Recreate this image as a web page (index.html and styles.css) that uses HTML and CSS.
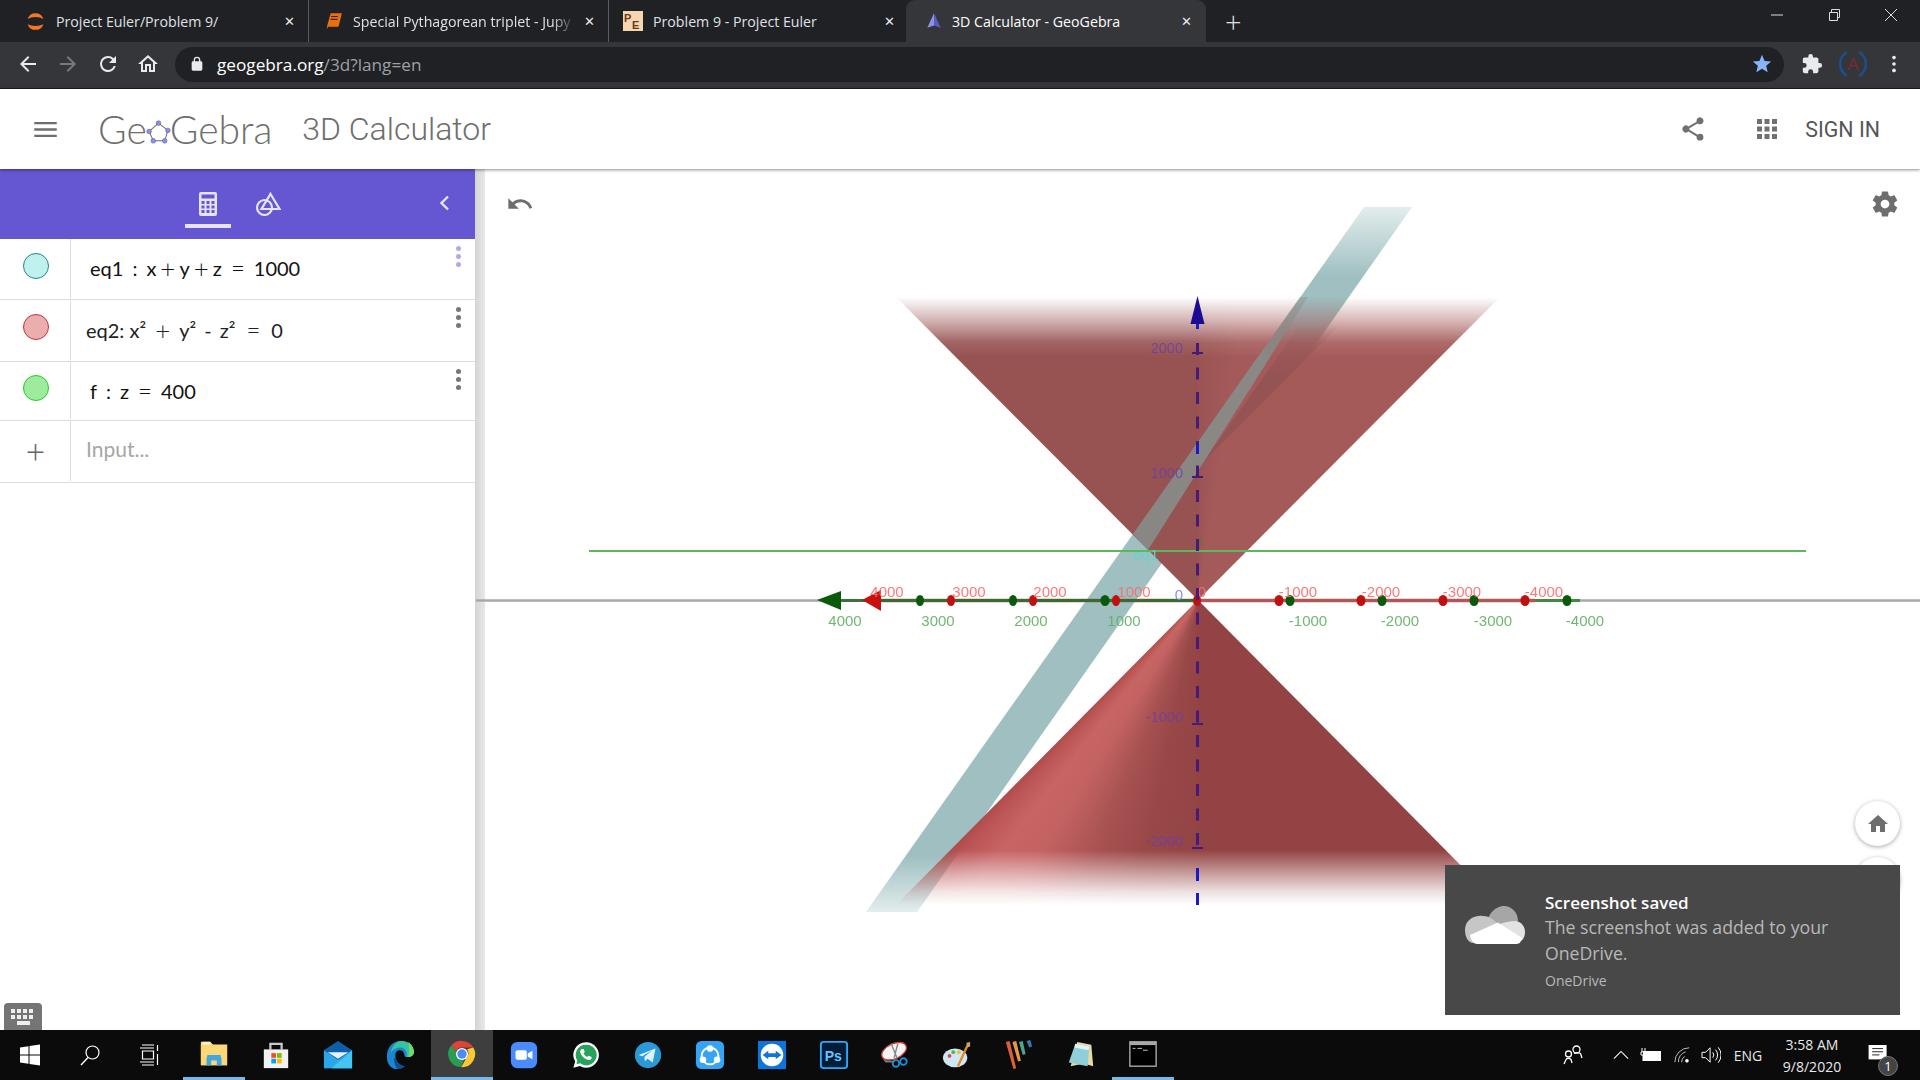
FILE: index.html
```html
<!DOCTYPE html>
<html lang="en">
<head>
    <meta charset="utf-8">
    <title>3D Calculator - GeoGebra</title>
    <link rel="stylesheet" href="styles.css">
</head>
<body>
    <!-- browser tabs -->
    <div class="tabstrip">
        <div class="tab">
            <svg class="favicon favicon-jupyter" viewBox="0 0 16 16"><path d="M2 6a6.300 6.300 0 0 1 12 0a8 4 0 0 0-12 0z" fill="#f37726"/><path d="M2 10a6.300 6.300 0 0 0 12 0a8 4 0 0 1-12 0z" fill="#f37726"/></svg>
            <span class="tab-title">Project Euler/Problem 9/</span>
            <span class="tab-close">&#10005;</span>
        </div>
        <div class="tab">
            <svg class="favicon" viewBox="0 0 16 16"><path d="M5 1h10l-3 12H3L1.500 15l.5-3z" fill="#e8710a"/><path d="M5.500 4h6M5 6.500h6" stroke="#3a2208" stroke-width="1"/></svg>
            <span class="tab-title tab-title-long">Special Pythagorean triplet - Jupy</span>
            <span class="tab-close">&#10005;</span>
        </div>
        <div class="tab">
            <svg class="favicon favicon-pe" viewBox="0 0 20 20"><rect width="20" height="20" fill="#f4d7b0"/><text x="1" y="11" class="pe-letter">P</text><text x="9" y="18" class="pe-letter">E</text></svg>
            <span class="tab-title">Problem 9 - Project Euler</span>
            <span class="tab-close">&#10005;</span>
        </div>
        <div class="tab tab-active">
            <svg class="favicon" viewBox="0 0 16 16"><path d="M8 1L2 14l6-2z" fill="#8f8fe8"/><path d="M8 1l6 13-6-2z" fill="#5c5cc0"/></svg>
            <span class="tab-title">3D Calculator - GeoGebra</span>
            <span class="tab-close">&#10005;</span>
        </div>
        <span class="new-tab">+</span>
        <div class="window-controls">
            <svg viewBox="0 0 14 14"><path d="M1 7h12" stroke="#ddd" fill="none"/></svg>
            <svg viewBox="0 0 14 14"><path d="M2.500 4.500h8v8h-8zM4.500 4.500v-3h8v8h-2" stroke="#ddd" fill="none"/></svg>
            <svg viewBox="0 0 14 14"><path d="M1 1l12 12M13 1L1 13" stroke="#ddd" fill="none"/></svg>
        </div>
    </div>

    <!-- address bar -->
    <div class="toolbar">
        <svg class="nav-btn" viewBox="0 0 24 24"><path d="M20 11H7.800l5.600-5.600L12 4l-8 8 8 8 1.400-1.400L7.800 13H20z" fill="#e8eaed"/></svg>
        <svg class="nav-btn" viewBox="0 0 24 24"><path d="M4 11h12.200l-5.600-5.600L12 4l8 8-8 8-1.400-1.400 5.600-5.600H4z" fill="#76787b"/></svg>
        <svg class="nav-btn" viewBox="0 0 24 24"><path d="M17.650 6.350A7.960 7.960 0 0 0 12 4a8 8 0 1 0 7.730 10h-2.080A6 6 0 1 1 12 6c1.660 0 3.140.69 4.220 1.780L13 11h7V4z" fill="#e8eaed"/></svg>
        <svg class="nav-btn" viewBox="0 0 24 24"><path d="M12 5.700l5 4.500V18h-2v-6H9v6H7v-7.800zM12 3L2 12h3v8h6v-6h2v6h6v-8h3z" fill="#e8eaed"/></svg>
        <div class="omnibox">
            <svg class="lock" viewBox="0 0 24 24"><path d="M18 8h-1V6a5 5 0 0 0-10 0v2H6a2 2 0 0 0-2 2v10c0 1.100.9 2 2 2h12a2 2 0 0 0 2-2V10a2 2 0 0 0-2-2zM9 6a3 3 0 0 1 6 0v2H9z" fill="#e8eaed"/></svg>
            <span class="url-host">geogebra.org</span><span class="url-path">/3d?lang=en</span>
            <svg class="star" viewBox="0 0 24 24"><path d="M12 17.300l6.200 3.700-1.600-7L22 9.200l-7.200-.6L12 2 9.200 8.600 2 9.200 7.500 14l-1.700 7z" fill="#8ab4f8"/></svg>
        </div>
        <div class="toolbar-right">
            <svg class="ext-btn" viewBox="0 0 24 24"><path d="M20.500 11H19V7c0-1.100-.9-2-2-2h-4V3.500a2.500 2.500 0 0 0-5 0V5H4c-1.100 0-2 .9-2 2v3.800h1.500a2.700 2.700 0 0 1 0 5.400H2V20c0 1.100.9 2 2 2h3.800v-1.500a2.700 2.700 0 0 1 5.400 0V22H17c1.100 0 2-.9 2-2v-4h1.500a2.500 2.500 0 0 0 0-5z" fill="#e8eaed"/></svg>
            <svg class="ext-btn avatar" viewBox="0 0 28 28"><path d="M8 2a14 14 0 0 0 0 24M20 2a14 14 0 0 1 0 24" stroke="#1c4f8f" stroke-width="2.500" fill="none"/><text x="14" y="20" class="avatar-letter">A</text></svg>
            <svg class="ext-btn" viewBox="0 0 24 24"><circle cx="12" cy="5" r="2" fill="#e8eaed"/><circle cx="12" cy="12" r="2" fill="#e8eaed"/><circle cx="12" cy="19" r="2" fill="#e8eaed"/></svg>
        </div>
    </div>

    <!-- geogebra header -->
    <header class="app-header">
        <svg class="menu-btn" viewBox="0 0 24 16"><path d="M0 0h24v2.500H0zM0 6.750h24v2.500H0zM0 13.500h24V16H0z" fill="#6e6e6e"/></svg>
        <div class="logo">
            <span>Ge</span>
            <svg class="logo-mark" viewBox="0 0 24 24"><path d="M12 3l9 7-3 10H7L3 11z" fill="none" stroke="#6e6e6e" stroke-width="1"/><g fill="#8f8fe8" stroke="#5a5ac0" stroke-width=".6"><circle cx="12" cy="3" r="2.200"/><circle cx="21" cy="10" r="2.200"/><circle cx="18" cy="20" r="2.200"/><circle cx="7" cy="20" r="2.200"/><circle cx="3" cy="11" r="2.200"/></g></svg>
            <span>Gebra</span>
        </div>
        <span class="app-title">3D Calculator</span>
        <div class="header-right">
            <svg class="share" viewBox="0 0 24 24"><path d="M18 16.080c-.76 0-1.440.3-1.960.77L8.910 12.700c.05-.23.090-.46.090-.7s-.04-.47-.09-.7l7.050-4.110A3 3 0 1 0 15 5c0 .24.040.47.090.7L8.040 9.810a3 3 0 1 0 0 4.380l7.120 4.160c-.05.21-.08.43-.08.65a2.920 2.920 0 1 0 2.920-2.920z" fill="#707070"/></svg>
            <svg class="apps" viewBox="0 0 20 20"><path d="M0 0h5v5H0zM7.500 0h5v5h-5zM15 0h5v5h-5zM0 7.500h5v5H0zM7.500 7.500h5v5h-5zM15 7.500h5v5h-5zM0 15h5v5H0zM7.500 15h5v5h-5zM15 15h5v5h-5z" fill="#707070"/></svg>
            <span class="sign-in">SIGN IN</span>
        </div>
    </header>

    <main class="workspace">
        <aside class="algebra">
            <div class="algebra-head">
                <div class="head-tab head-tab-active">
                    <svg viewBox="0 0 18 24"><rect width="18" height="24" rx="2" fill="#e6e3fa"/><rect x="2.500" y="2.500" width="13" height="4" fill="#6557d2"/><path d="M2.500 9h3v3h-3zM7.500 9h3v3h-3zM12.500 9h3v3h-3zM2.500 13.500h3v3h-3zM7.500 13.500h3v3h-3zM12.500 13.500h3v3h-3zM2.500 18h3v3h-3zM7.500 18h3v3h-3zM12.500 18h3v3h-3z" fill="#6557d2"/></svg>
                </div>
                <div class="head-tab">
                    <svg viewBox="0 0 26 26"><circle cx="9.500" cy="16.500" r="7.500" fill="none" stroke="#e6e3fa" stroke-width="2.200"/><path d="M15.500 3L24.500 18H6.500z" fill="none" stroke="#e6e3fa" stroke-width="2.200"/></svg>
                </div>
                <svg class="collapse" viewBox="0 0 10 16"><path d="M8.500 1.500L2 8l6.500 6.500" fill="none" stroke="#e6e3fa" stroke-width="2.400"/></svg>
            </div>

            <div class="row row-first">
                <div class="row-left"><span class="marble marble-teal"></span></div>
                <div class="row-math">eq1<span class="sp">:</span>x<span class="op">+</span>y<span class="op">+</span>z<span class="eq">=</span>1000</div>
                <div class="row-more row-more-active"><i></i><i></i><i></i></div>
            </div>
            <div class="row row-second">
                <div class="row-left"><span class="marble marble-red"></span></div>
                <div class="row-math row-math-plain">eq2: x&sup2;<span class="op op-wide">+</span>y&sup2;<span class="minus">-</span>z&sup2;<span class="eq eq-wide">=</span>0</div>
                <div class="row-more"><i></i><i></i><i></i></div>
            </div>
            <div class="row row-third">
                <div class="row-left"><span class="marble marble-green"></span></div>
                <div class="row-math">f<span class="sp">:</span>z<span class="eq">=</span>400</div>
                <div class="row-more"><i></i><i></i><i></i></div>
            </div>
            <div class="row row-input">
                <div class="row-left"><span class="plus">+</span></div>
                <div class="row-math row-math-plain row-placeholder">Input...</div>
            </div>

            <div class="keyboard-btn">
                <svg viewBox="0 0 30 20"><path d="M3 2h4v4H3zM9 2h4v4H9zM15 2h4v4h-4zM21 2h4v4h-4zM3 8h4v4H3zM9 8h4v4H9zM15 8h4v4h-4zM21 8h4v4h-4zM9 14h13v4H9z" fill="#eee"/></svg>
            </div>
        </aside>

        <div class="splitter"></div>

        <section class="graphics">
            <svg class="scene" viewBox="485 169 1435 861">
                <defs>
                    <linearGradient id="plane-fade" gradientUnits="userSpaceOnUse" x1="0" y1="207" x2="0" y2="912">
                        <stop offset="0" stop-color="#e3eded"/>
                        <stop offset=".1" stop-color="#9fbfc0"/>
                        <stop offset=".92" stop-color="#9fbfc0"/>
                        <stop offset="1" stop-color="#e3eded"/>
                    </linearGradient>
                    <linearGradient id="band-fade" gradientUnits="userSpaceOnUse" x1="0" y1="325" x2="0" y2="375">
                        <stop offset="0" stop-color="#8a4f4f" stop-opacity="0"/>
                        <stop offset="1" stop-color="#8a4f4f" stop-opacity=".6"/>
                    </linearGradient>
                    <linearGradient id="strip-fade" gradientUnits="userSpaceOnUse" x1="0" y1="297" x2="0" y2="360">
                        <stop offset="0" stop-color="#888c89" stop-opacity=".35"/>
                        <stop offset="1" stop-color="#888c89" stop-opacity=".92"/>
                    </linearGradient>
                </defs>
                <polygon points="1364,207 1412,207 917,912 866,912" fill="url(#plane-fade)"/>
            </svg>

            <div class="cone cone-upper"></div>
            <div class="cone cone-lower"></div>

            <svg class="scene" viewBox="485 169 1435 861">
                <!-- plane strip in front of the upper nappe -->
                <polygon points="1300,325 1340,325 1205,460" fill="url(#band-fade)"/>
                <polygon points="1300,297 1308,297 1148,550 1133,534" fill="url(#strip-fade)"/>

                <!-- f: z = 400 -->
                <line x1="589" y1="551" x2="1806" y2="551" class="line-f"/>
                <text x="1199" y="550" class="label label-f">f</text>
                <text x="1146" y="560" class="label label-eq">eq1</text>

                <!-- x and y axes -->
                <line x1="476" y1="600.500" x2="1920" y2="600.500" class="axis-base"/>
                <line x1="881" y1="600.500" x2="1535" y2="600.500" class="axis-red"/>
                <line x1="840" y1="600.500" x2="1197" y2="600.500" class="axis-green"/>
                <line x1="1535" y1="600.500" x2="1580" y2="600.500" class="axis-green-end"/>
                <polygon points="862,600 881,590 881,611" fill="#c81010"/>
                <polygon points="817,600 841,591 841,610" fill="#0b5a0b"/>

                <g fill="#c01010">
                    <ellipse cx="951" cy="600.500" rx="4" ry="5.500"/>
                    <ellipse cx="1033" cy="600.500" rx="4" ry="5.500"/>
                    <ellipse cx="1116" cy="600.500" rx="4" ry="5.500"/>
                    <ellipse cx="1279" cy="600.500" rx="4.500" ry="5.500"/>
                    <ellipse cx="1361" cy="600.500" rx="4.500" ry="5.500"/>
                    <ellipse cx="1443" cy="600.500" rx="4.500" ry="5.500"/>
                    <ellipse cx="1525" cy="600.500" rx="4.500" ry="5.500"/>
                    <ellipse cx="1197" cy="600.500" rx="4" ry="5.500"/>
                </g>
                <g fill="#0b5a0b">
                    <ellipse cx="920" cy="600.500" rx="4" ry="5.500"/>
                    <ellipse cx="1013" cy="600.500" rx="4" ry="5.500"/>
                    <ellipse cx="1105" cy="600.500" rx="4.500" ry="5.500"/>
                    <ellipse cx="1290" cy="600.500" rx="4.500" ry="5.500"/>
                    <ellipse cx="1382" cy="600.500" rx="4.500" ry="5.500"/>
                    <ellipse cx="1474" cy="600.500" rx="4.500" ry="5.500"/>
                    <ellipse cx="1567" cy="600.500" rx="4.500" ry="5.500"/>
                </g>

                <g class="label label-red">
                    <text x="887" y="597">4000</text>
                    <text x="969" y="597">3000</text>
                    <text x="1050" y="597">2000</text>
                    <text x="1134" y="597">1000</text>
                    <text x="1202" y="597">0</text>
                    <text x="1298" y="597">-1000</text>
                    <text x="1381" y="597">-2000</text>
                    <text x="1462" y="597">-3000</text>
                    <text x="1544" y="597">-4000</text>
                </g>
                <g class="label label-green">
                    <text x="845" y="626">4000</text>
                    <text x="938" y="626">3000</text>
                    <text x="1031" y="626">2000</text>
                    <text x="1124" y="626">1000</text>
                    <text x="1308" y="626">-1000</text>
                    <text x="1400" y="626">-2000</text>
                    <text x="1493" y="626">-3000</text>
                    <text x="1585" y="626">-4000</text>
                </g>
                <text x="1179" y="600" class="label label-blue">0</text>

                <!-- z axis -->
                <line x1="1197.500" y1="323" x2="1197.500" y2="329" class="axis-z axis-z-end"/>
                <line x1="1197.500" y1="343" x2="1197.500" y2="855" class="axis-z axis-z-dash"/>
                <line x1="1197.500" y1="443" x2="1197.500" y2="454" class="axis-z axis-z-end"/>
                <line x1="1197.500" y1="868" x2="1197.500" y2="881" class="axis-z axis-z-end"/>
                <line x1="1197.500" y1="893" x2="1197.500" y2="905" class="axis-z axis-z-end"/>
                <polygon points="1197.500,296 1204.500,324 1190.500,324" fill="#1a0a96"/>
                <path d="M1192 353h11M1192 477h11M1192 724h11M1192 848h11" class="axis-tick"/>
                <g class="label label-z">
                    <text x="1183" y="353">2000</text>
                    <text x="1183" y="478">1000</text>
                    <text x="1183" y="722">-1000</text>
                    <text x="1183" y="846">-2000</text>
                </g>
            </svg>

            <svg class="undo" viewBox="0 0 24 24"><path d="M12.500 8c-2.650 0-5.050.99-6.900 2.600L2 7v9h9l-3.620-3.620c1.390-1.160 3.160-1.880 5.120-1.880 3.540 0 6.550 2.310 7.600 5.500l2.370-.78C21.080 11.030 17.150 8 12.500 8z" fill="#6e6e6e"/></svg>
            <svg class="gear" viewBox="0 0 24 24"><path d="M19.430 12.980c.04-.32.070-.64.070-.98s-.03-.66-.07-.98l2.110-1.650a.5.500 0 0 0 .12-.64l-2-3.460a.5.500 0 0 0-.61-.22l-2.490 1a7.300 7.300 0 0 0-1.690-.98l-.38-2.650A.49.490 0 0 0 14 2h-4a.49.490 0 0 0-.49.420l-.38 2.650c-.61.250-1.170.59-1.690.98l-2.490-1a.49.490 0 0 0-.61.220l-2 3.460a.49.490 0 0 0 .12.640l2.110 1.650c-.04.320-.07.650-.07.980s.03.660.07.980l-2.110 1.650a.5.500 0 0 0-.12.640l2 3.460c.12.220.39.300.61.220l2.490-1c.52.400 1.080.73 1.690.98l.38 2.650c.03.240.24.420.49.420h4c.25 0 .46-.18.490-.42l.38-2.650c.61-.25 1.170-.59 1.690-.98l2.490 1c.23.090.49 0 .61-.22l2-3.460a.5.500 0 0 0-.12-.64zM12 15.500a3.500 3.500 0 1 1 0-7 3.500 3.500 0 0 1 0 7z" fill="#6e6e6e"/></svg>
            <div class="round-btn round-btn-home">
                <svg viewBox="0 0 24 24"><path d="M10 20v-6h4v6h5v-8h3L12 3 2 12h3v8z" fill="#6e6e6e"/></svg>
            </div>
            <div class="round-btn round-btn-hidden"></div>
        </section>
    </main>

    <!-- windows taskbar -->
    <footer class="taskbar">
        <div class="task-slot task-sys">
            <svg viewBox="0 0 22 22"><path d="M1 3.500l8.500-1.200v8.200H1zM10.500 2.100L21 .6v9.900H10.500zM1 11.500h8.500v8.200L1 18.500zM10.500 11.500H21v9.900l-10.500-1.500z" fill="#fff"/></svg>
        </div>
        <div class="task-slot task-sys">
            <svg viewBox="0 0 22 22"><circle cx="13.500" cy="8.500" r="6.500" fill="none" stroke="#fff" stroke-width="1.200"/><path d="M9 13.500L2 21" stroke="#fff" stroke-width="1.400"/></svg>
        </div>
        <div class="task-slot task-sys">
            <svg viewBox="0 0 22 22"><path d="M3 1h12M3 21h12M3.500 7h11v8h-11zM18.500 1v6M18.500 10v11M1 4h14M1 18h14" fill="none" stroke="#fff" stroke-width="1.200"/></svg>
        </div>

        <div class="task-apps">
            <div class="task-app task-open">
                <svg viewBox="0 0 32 32"><path d="M2 3h10l3 3h15v22H2z" fill="#ffe08a"/><path d="M2 6h28v22H2z" fill="#fbd777"/><rect x="4" y="3" width="8" height="3" fill="#fff2c4"/><path d="M9 17h14l1 4v7h-5v-5h-6v5H8v-7z" fill="#3fa8e0"/></svg>
            </div>
            <div class="task-app">
                <svg viewBox="0 0 32 32"><path d="M10 10V4h12v6" fill="none" stroke="#c9c9c9" stroke-width="2.400"/><rect x="3" y="10" width="26" height="20" fill="#f2f2f2"/><rect x="11" y="14" width="5" height="5" fill="#f25022"/><rect x="17" y="14" width="5" height="5" fill="#7fba00"/><rect x="11" y="20" width="5" height="5" fill="#00a4ef"/><rect x="17" y="20" width="5" height="5" fill="#ffb900"/></svg>
            </div>
            <div class="task-app">
                <svg viewBox="0 0 32 32"><path d="M1 11L16 1l15 10v19H1z" fill="#0f5ea8"/><path d="M5 13h22L16 20z" fill="#e8f2fb"/><path d="M1 11l15 10 15-10v19H1z" fill="#29a7e8"/><path d="M31 11v19H9z" fill="#43c4f2"/></svg>
            </div>
            <div class="task-app">
                <svg viewBox="0 0 32 32"><path d="M2 18C2 7 9 1 17 1c8 0 13 5 14 12-1 6-6 5-9 5-2-1-1-4-3-6-3-2-8-1-8 5 0 5 4 10 10 11-2 2-5 3-8 3C6 31 2 25 2 18z" fill="#1a86d0"/><path d="M17 1c8 0 13 5 14 12-1 5-5 5-8 5 1-5-1-9-6-10-5 0-9 2-11 6C8 6 12 1 17 1z" fill="#35c3a0"/><path d="M25 2c4 3 6 7 6 11-1 4-4 5-6 5 1-5 1-11 0-16z" fill="#6fdc6a"/><path d="M11 17c0 5 4 10 10 11-2 2-5 3-8 3-2-4-5-10-2-14z" fill="#0e4f94"/></svg>
            </div>
            <div class="task-app task-active task-open">
                <svg viewBox="0 0 32 32"><path d="M16 2a14 14 0 0 1 12.100 7H16a7 7 0 0 0-6.600 4.700L5.100 6.300A14 14 0 0 1 16 2z" fill="#db4437"/><path d="M28.100 9A14 14 0 0 1 15 30l6-10.400A7 7 0 0 0 21.500 11z" fill="#fcc934"/><path d="M5.100 6.300L11 16.500a7 7 0 0 0 7.800 4l-4 9.400A14 14 0 0 1 5.100 6.300z" fill="#2a9d55"/><circle cx="16" cy="16" r="6.500" fill="#fff"/><circle cx="16" cy="16" r="5" fill="#4c8bf5"/></svg>
            </div>
            <div class="task-app">
                <svg viewBox="0 0 32 32"><rect x="2" y="2" width="28" height="28" rx="7" fill="#4a8cff"/><rect x="7" y="11" width="12" height="10" rx="2" fill="#fff"/><path d="M20 14.500l5-3v9l-5-3z" fill="#fff"/></svg>
            </div>
            <div class="task-app">
                <svg viewBox="0 0 32 32"><path d="M16 2.500A13.500 13.500 0 0 0 4.500 23L2.500 29.500l7-1.800A13.500 13.500 0 1 0 16 2.500z" fill="#fff"/><path d="M16 5a11 11 0 0 0-9.200 17l-1 3.800 4-1A11 11 0 1 0 16 5z" fill="#25a35a"/><path d="M11.500 9.500l2 .2 1.200 3-1.300 1.500c.8 1.800 2.200 3.200 4 4l1.500-1.400 3 1.300v2c-1 1.400-3 1.600-5 .8-3.500-1.400-6-4-7-7.500-.4-1.900.4-3.300 1.600-3.900z" fill="#fff"/></svg>
            </div>
            <div class="task-app">
                <svg viewBox="0 0 32 32"><circle cx="16" cy="16" r="14" fill="#2a9ad6"/><path d="M6 16l18-7-3 15-5.500-4-2.800 2.700-.6-4.500 8-7-10.200 6.200z" fill="#dff1fb"/></svg>
            </div>
            <div class="task-app">
                <svg viewBox="0 0 32 32"><rect x="1" y="1" width="30" height="30" rx="6" fill="#35a4f6"/><circle cx="16" cy="17" r="9" fill="none" stroke="#fff" stroke-width="2"/><circle cx="16" cy="9" r="3.500" fill="#fff"/><circle cx="8.500" cy="21" r="3.500" fill="#fff"/><circle cx="23.500" cy="21" r="3.500" fill="#fff"/></svg>
            </div>
            <div class="task-app">
                <svg viewBox="0 0 32 32"><rect x="1" y="1" width="30" height="30" fill="#0e74dc"/><circle cx="16" cy="16" r="12" fill="#fff"/><path d="M6 16l6-4.500V14h8v-2.500l6 4.500-6 4.500V18h-8v2.500z" fill="#0e74dc"/></svg>
            </div>
            <div class="task-app">
                <svg viewBox="0 0 32 32"><rect x="2" y="2" width="28" height="28" rx="3" fill="#001e36" stroke="#31a8ff" stroke-width="2"/><text x="6" y="22" class="ps-text">Ps</text></svg>
            </div>
            <div class="task-app">
                <svg viewBox="0 0 32 32"><ellipse cx="15" cy="12" rx="14" ry="8" transform="rotate(-25 15 12)" fill="#f4f4f4" stroke="#c8403a" stroke-width="1.400"/><path d="M3 20c6 3 10 3 14 1l-2 3H6z" fill="#7a7a7a"/><path d="M12 4l6 15M19 4l-4 15" stroke="#888" stroke-width="1.500"/><circle cx="17" cy="25" r="3.500" fill="none" stroke="#1a8fd0" stroke-width="2"/><circle cx="25" cy="23" r="3.500" fill="none" stroke="#1a8fd0" stroke-width="2"/></svg>
            </div>
            <div class="task-app">
                <svg viewBox="0 0 32 32"><ellipse cx="14" cy="19" rx="13" ry="10" fill="#cfe6f4"/><circle cx="8" cy="17" r="2" fill="#d94b3a"/><circle cx="12" cy="13" r="2" fill="#58b34a"/><circle cx="18" cy="13" r="2" fill="#e8c23a"/><path d="M28 4L17 28" stroke="#e58a1f" stroke-width="2.400"/><path d="M26 3l4-1 0 5-3 1z" fill="#c8a46a"/></svg>
            </div>
            <div class="task-app">
                <svg viewBox="0 0 32 32"><path d="M2 2l4-1 7 29-3 1z" fill="#d9603a"/><path d="M9 2l4-1 5 21-3 1z" fill="#ea9a3c"/><path d="M16 2l4-1 3 14-3 1z" fill="#4fa48f"/><path d="M24 1l4-1 2 7-3 1z" fill="#3a78b8"/></svg>
            </div>
            <div class="task-app">
                <svg viewBox="0 0 32 32"><path d="M12 2l15 3 2 23-10-3-14 3z" fill="#e9d9a4"/><path d="M10 4l15 3-2 21L3 24z" fill="#8fd0d8"/><path d="M10 4l15 3-1 4-15-3z" fill="#dff4f6"/></svg>
            </div>
            <div class="task-app task-open">
                <svg viewBox="0 0 32 32"><rect x="2" y="3" width="28" height="26" fill="#000" stroke="#a8a8a8" stroke-width="1.500"/><rect x="2" y="3" width="28" height="3.500" fill="#a8a8a8"/><path d="M5 10h3M10 10h5M16 12h5" stroke="#ccc" stroke-width="1"/></svg>
            </div>
        </div>

        <div class="tray">
            <svg class="tray-people" viewBox="0 0 22 22"><circle cx="14.500" cy="5.500" r="3.500" fill="none" stroke="#fff" stroke-width="1.300"/><circle cx="6.500" cy="10" r="3" fill="none" stroke="#fff" stroke-width="1.300"/><path d="M10 19l-1-3.500c-1.500-1.500-4-1.500-5 0L2 20M12 9.500c2-1 5-1 6.500 0L20 14" fill="none" stroke="#fff" stroke-width="1.300"/></svg>
            <svg class="tray-chevron" viewBox="0 0 18 10"><path d="M1 9l8-8 8 8" fill="none" stroke="#fff" stroke-width="1.200"/></svg>
            <svg class="tray-battery" viewBox="0 0 22 14"><rect x="3" y="3" width="18" height="10" fill="#fff"/><path d="M2 0v4M5 0v4M1 4h5v3H1zM3 7v6" stroke="#fff" fill="none"/></svg>
            <svg class="tray-wifi" viewBox="0 0 20 20"><path d="M2 18A16 16 0 0 1 18 2M6 18A12 12 0 0 1 14 6.500M9.500 18A8 8 0 0 1 13 11.500" fill="none" stroke="#bbb" stroke-width="1.100"/><circle cx="15.500" cy="16.500" r="2" fill="#fff"/></svg>
            <svg class="tray-speaker" viewBox="0 0 22 20"><path d="M1 7h4l5-5v16l-5-5H1z" fill="none" stroke="#fff" stroke-width="1.100"/><path d="M13 7a5 5 0 0 1 0 6M16 4a9 9 0 0 1 0 12M19 1.500a13 13 0 0 1 0 17" fill="none" stroke="#fff" stroke-width="1.100"/></svg>
            <span class="tray-lang">ENG</span>
            <div class="tray-clock">
                <span>3:58 AM</span>
                <span>9/8/2020</span>
            </div>
            <div class="tray-notify">
                <svg viewBox="0 0 22 20"><path d="M0 0h20v16H0z" fill="#fff"/><path d="M4 4h12M4 7.500h12M4 11h8" stroke="#111" stroke-width="1"/></svg>
                <span class="notify-badge">1</span>
            </div>
        </div>
    </footer>

    <!-- onedrive toast -->
    <div class="toast">
        <svg class="toast-icon" viewBox="0 0 60 40"><path d="M22 20C22 8 32 1 39 1c8 0 14 7 14 15l-16 10z" fill="#a6a6a6"/><path d="M9 38C2 38 0 30 0 25 0 15 9 10 18 11c8 0 13 6 16 10L10 34z" fill="#c6c6c6"/><path d="M33 20c6-3 12-4 18-4 5 1 9 5 9 11 0 3-1 7-4 9z" fill="#e2e2e2"/><path d="M5 30L33 17.500 57 33c-1 5-3 6-7 6H12c-3 0-6-3-7-9z" fill="#fff"/></svg>
        <div class="toast-text">
            <div class="toast-title">Screenshot saved</div>
            <div class="toast-body">The screenshot was added to your OneDrive.</div>
            <div class="toast-app">OneDrive</div>
        </div>
    </div>
</body>
</html>
```

FILE: styles.css
```css
* {
    box-sizing: border-box;
}

html, body {
    margin: 0;
    width: 1920px;
    height: 1080px;
    overflow: hidden;
}

body {
    display: flex;
    flex-direction: column;
    position: relative;
    background-color: #fff;
    font-family: "Open Sans", "Liberation Sans", sans-serif;
}

/* tabs */
.tabstrip {
    display: flex;
    align-items: center;
    height: 42px;
    padding-left: 9px;
    background-color: #202124;
    color: #dfe1e5;
    font-size: 14.200px;
}

.tab {
    display: flex;
    align-items: center;
    position: relative;
    width: 300px;
    height: 42px;
    padding-left: 16px;
    border-right: 1px solid #5a5c60;
}

.tab:nth-child(3) {
    border-right: none;
}

.tab-active {
    background-color: #35363a;
    border-right: none;
    border-radius: 9px 9px 0 0;
    margin-left: -3px;
    padding-left: 19px;
    color: #fff;
}

.favicon {
    width: 18px;
    height: 18px;
    flex: none;
    margin-right: 10px;
}

.tab-active .favicon {
    margin-right: 9px;
}

.favicon-jupyter {
    width: 21px;
    height: 21px;
}

.favicon-pe {
    width: 20px;
    height: 20px;
    margin-left: -2px;
}

.pe-letter {
    font: bold 11px "Liberation Sans", sans-serif;
    fill: #6b3a1a;
}

.tab-title {
    width: 215px;
    white-space: nowrap;
}

.tab-title-long {
    width: 222px;
    -webkit-mask-image: linear-gradient(to right, #000 90%, transparent 100%);
    mask-image: linear-gradient(to right, #000 90%, transparent 100%);
}

.tab-close {
    position: absolute;
    left: 275px;
    font-size: 13px;
    color: #e8eaed;
}

.new-tab {
    margin-left: 19px;
    font-size: 29px;
    font-weight: 300;
    line-height: 1;
    color: #dfe1e5;
}

.window-controls {
    display: flex;
    gap: 43px;
    margin-left: auto;
    padding-right: 22px;
    margin-top: -12px;
}

.window-controls svg {
    width: 14px;
    height: 14px;
}

/* address bar */
.toolbar {
    display: flex;
    align-items: center;
    height: 47px;
    padding: 0 0 2px 16px;
    background-color: #35363a;
    border-bottom: 1px solid #1a1a1a;
}

.nav-btn {
    width: 24px;
    height: 24px;
    margin-right: 16px;
}

.omnibox {
    display: flex;
    align-items: center;
    width: 1609px;
    height: 35px;
    margin-left: -1px;
    padding-left: 14px;
    border-radius: 18px;
    background-color: #202124;
    font-size: 17.200px;
}

.lock {
    width: 16px;
    height: 16px;
    margin-right: 12px;
}

.url-host {
    color: #fff;
}

.url-path {
    color: #9aa0a6;
}

.star {
    width: 22px;
    height: 22px;
    margin-left: auto;
    margin-right: 11px;
}

.toolbar-right {
    display: flex;
    align-items: center;
    gap: 18px;
    margin-left: 17px;
}

.ext-btn {
    width: 22px;
    height: 22px;
}

.avatar {
    width: 28px;
    height: 28px;
    margin: 0 -2px;
}

.avatar-letter {
    font: 17px "Liberation Sans", sans-serif;
    fill: #7a2a32;
    text-anchor: middle;
}

/* app header */
.app-header {
    display: flex;
    align-items: center;
    position: relative;
    z-index: 2;
    height: 80px;
    padding-left: 34px;
    background-color: #fff;
    box-shadow: 0 1px 3px rgba(0, 0, 0, .45);
    color: #6e6e6e;
}

.menu-btn {
    width: 23px;
    height: 15px;
}

.logo {
    display: flex;
    align-items: center;
    margin-left: 41px;
    font-family: "Lato", sans-serif;
    font-weight: 300;
    font-size: 39px;
}

.logo-mark {
    width: 25px;
    height: 25px;
    margin: 6px -1px 0 -1px;
}

.app-title {
    margin-left: 30px;
    font-family: "Roboto", sans-serif;
    font-weight: 300;
    font-size: 32px;
}

.header-right {
    display: flex;
    align-items: center;
    margin-left: auto;
    padding-right: 40px;
}

.share {
    width: 28px;
    height: 28px;
}

.apps {
    width: 20px;
    height: 20px;
    margin-left: 50px;
}

.sign-in {
    margin-left: 28px;
    font-family: "Roboto", sans-serif;
    font-size: 21.400px;
    color: #555;
}

/* main area */
.workspace {
    display: flex;
    height: 861px;
}

.algebra {
    position: relative;
    width: 475px;
    background-color: #fff;
}

.algebra-head {
    display: flex;
    align-items: flex-start;
    justify-content: center;
    position: relative;
    height: 70px;
    padding-left: 1px;
    background-color: #6557d2;
}

.head-tab {
    display: flex;
    align-items: center;
    justify-content: center;
    width: 46px;
    height: 59px;
    margin: 0 7px;
    padding-top: 15px;
    border-bottom: 4px solid transparent;
}

.head-tab svg {
    width: 18px;
    height: 24px;
}

.head-tab + .head-tab svg {
    width: 26px;
    height: 26px;
}

.head-tab-active {
    border-bottom-color: #e6e3fa;
}

.collapse {
    position: absolute;
    right: 25px;
    top: 26px;
    width: 11px;
    height: 16px;
}

.row {
    display: flex;
    position: relative;
    border-bottom: 1px solid #dcdcdc;
}

.row-first {
    height: 61px;
}

.row-second {
    height: 62px;
}

.row-third {
    height: 59px;
}

.row-input {
    height: 62px;
}

.row-left {
    display: flex;
    align-items: center;
    justify-content: center;
    width: 71px;
    flex: none;
    padding-left: 1px;
    border-right: 1px solid #dcdcdc;
    margin-bottom: 1px;
}

.marble {
    width: 26px;
    height: 26px;
    margin-bottom: 6px;
    border-radius: 50%;
    border: 1px solid;
}

.marble-teal {
    background-color: #c1f1ef;
    border-color: #1a8a8a;
}

.marble-red {
    background-color: #eaaeae;
    border-color: #c8323a;
}

.marble-green {
    background-color: #9deb9d;
    border-color: #1fd01f;
}

.plus {
    font-size: 34px;
    font-weight: 300;
    line-height: 1;
    color: #666;
    margin-top: 2px;
}

.row-math {
    display: flex;
    align-items: center;
    height: 58px;
    padding: 0 0 1px 19px;
    font-family: "Lato", sans-serif;
    font-size: 20px;
    color: #111;
    white-space: pre;
}

.row-math-plain {
    padding-left: 15px;
}

.row-second .row-math {
    padding-top: 3px;
    color: #222;
}

.row-placeholder {
    padding-top: 0;
    padding-bottom: 4px;
    font-size: 21px;
    color: #a6a6a6;
}

.sp {
    margin: 0 9px;
}

.op {
    margin: 0 4px;
    font-size: 26px;
    font-weight: 300;
    line-height: 1;
}

.op-wide {
    margin: 0 9px;
}

.minus {
    margin: 0 8px;
}

.eq {
    margin: 0 9px;
    font-size: 24px;
    font-weight: 300;
    line-height: 1;
}

.eq-wide {
    margin: 0 11px;
}

.row-more {
    display: flex;
    flex-direction: column;
    gap: 3px;
    position: absolute;
    right: 14px;
    top: 7px;
}

.row-more i {
    display: block;
    width: 5px;
    height: 5px;
    border-radius: 50%;
    background-color: #777;
}

.row-more-active i {
    background-color: #b3a8ee;
}

.keyboard-btn {
    display: flex;
    align-items: center;
    justify-content: center;
    position: absolute;
    left: 4px;
    bottom: 0;
    width: 38px;
    height: 27px;
    border-radius: 4px 4px 0 0;
    background-color: #757575;
}

.keyboard-btn svg {
    width: 30px;
    height: 20px;
}

.splitter {
    width: 10px;
    flex: none;
    background: linear-gradient(to right, #d4d4d4, #e8e8e8);
}

.graphics {
    position: relative;
    flex: 1;
    background-color: #fff;
}

.scene {
    position: absolute;
    left: 0;
    top: 0;
    width: 1435px;
    height: 861px;
    overflow: visible;
}

.cone {
    position: absolute;
    left: 411px;
    width: 604px;
}

.cone-upper {
    top: 128px;
    height: 303px;
    background: conic-gradient(from 0deg at 302px 303px, #9a5353 0deg, #a55a5a 9deg, #a55a5a 46deg, #975252 46deg, #975252 360deg);
    clip-path: polygon(0 0, 100% 0, 50% 100%);
    -webkit-mask-image: linear-gradient(to bottom, transparent 0, rgba(0, 0, 0, .45) 8%, rgba(0, 0, 0, .9) 15%, #000 20%);
    mask-image: linear-gradient(to bottom, transparent 0, rgba(0, 0, 0, .45) 8%, rgba(0, 0, 0, .9) 15%, #000 20%);
}

.cone-lower {
    top: 431px;
    height: 305px;
    background: conic-gradient(from 180deg at 302px 0, #934444 0deg, #994848 12deg, #a85252 22deg, #c46262 32deg, #c76565 38deg, #bb5555 43deg, #a84444 46deg, #934343 46deg, #934343 360deg);
    clip-path: polygon(50% 0, 100% 100%, 0 100%);
    -webkit-mask-image: linear-gradient(to bottom, #000 82%, rgba(0, 0, 0, .5) 90%, rgba(0, 0, 0, .15) 96%, transparent 100%);
    mask-image: linear-gradient(to bottom, #000 82%, rgba(0, 0, 0, .5) 90%, rgba(0, 0, 0, .15) 96%, transparent 100%);
}

.line-f {
    stroke: #5cb85c;
    stroke-width: 2;
}

.axis-base {
    stroke: #a8a8a8;
    stroke-width: 2.500;
}

.axis-red {
    stroke: #b05858;
    stroke-width: 3.500;
}

.axis-green {
    stroke: #2b6e2b;
    stroke-width: 3;
    opacity: .9;
}

.axis-green-end {
    stroke: #3f8a3f;
    stroke-width: 3;
}

.axis-z {
    stroke-width: 3;
}

.axis-z-dash {
    stroke: #451a78;
    stroke-dasharray: 12 12.500;
}

.axis-z-end {
    stroke: #1a1ac8;
}

.axis-tick {
    stroke: #451a78;
    stroke-width: 2;
    fill: none;
}

.label {
    font-family: "Liberation Sans", sans-serif;
    font-size: 15px;
    text-anchor: middle;
    opacity: .9;
}

.label-red {
    fill: #ff6b6b;
}

.label-green {
    fill: #62b062;
}

.label-blue {
    fill: #8080f0;
}

.label-f {
    fill: #5c7a1a;
    font-style: italic;
}

.label-eq {
    fill: #5fd6d0;
}

.label-z {
    fill: #6a3fa8;
    text-anchor: end;
    font-size: 14.500px;
    opacity: .8;
}

.undo {
    position: absolute;
    left: 21px;
    top: 21px;
    width: 28px;
    height: 28px;
}

.gear {
    position: absolute;
    right: 20px;
    top: 20px;
    width: 30px;
    height: 30px;
}

.round-btn {
    display: flex;
    align-items: center;
    justify-content: center;
    position: absolute;
    right: 20px;
    width: 45px;
    height: 45px;
    border-radius: 50%;
    background-color: #fff;
    box-shadow: 0 1px 4px rgba(0, 0, 0, .35);
}

.round-btn-home {
    top: 632px;
}

.round-btn-hidden {
    top: 688px;
}

.round-btn svg {
    width: 24px;
    height: 24px;
}

/* taskbar */
.taskbar {
    display: flex;
    align-items: center;
    position: relative;
    z-index: 3;
    height: 50px;
    background-color: #0b0b0b;
    color: #fff;
}

.task-slot {
    display: flex;
    align-items: center;
    justify-content: center;
    width: 60px;
    height: 50px;
    flex: none;
}

.task-slot svg {
    width: 22px;
    height: 22px;
}

.task-apps {
    display: flex;
    margin-left: 3px;
}

.task-app {
    display: flex;
    align-items: center;
    justify-content: center;
    width: 61.960px;
    height: 50px;
    padding-bottom: 1px;
}

.task-app svg {
    width: 30px;
    height: 30px;
}

.task-open {
    border-bottom: 3px solid #76b9ed;
    padding-bottom: 0;
}

.task-active {
    background-color: #3e3e3e;
}

.ps-text {
    font: bold 15px "Liberation Sans", sans-serif;
    fill: #6cc0ff;
}

.tray {
    display: flex;
    align-items: center;
    margin-left: auto;
    height: 50px;
    width: 368px;
    flex: none;
    font-size: 14px;
    color: #e8e8e8;
}

.tray svg {
    flex: none;
}

.tray-people {
    width: 22px;
    height: 22px;
    margin: 0 10px 0 10px;
}

.tray-chevron {
    width: 16px;
    height: 10px;
    margin: 0 7px 0 19px;
}

.tray-battery {
    width: 22px;
    height: 14px;
    margin: 0 5px 0 4px;
}

.tray-wifi {
    width: 18px;
    height: 18px;
    margin: 0 7px 0 6px;
}

.tray-speaker {
    width: 20px;
    height: 18px;
    margin: 0 3px;
}

.tray-lang {
    width: 48px;
    text-align: center;
}

.tray-clock {
    display: flex;
    flex-direction: column;
    align-items: center;
    gap: 2px;
    width: 80px;
    line-height: 20px;
    padding-top: 1px;
}

.tray-notify {
    position: relative;
    width: 52px;
    height: 50px;
}

.tray-notify svg {
    position: absolute;
    left: 16px;
    top: 15px;
    width: 21px;
    height: 18px;
}

.notify-badge {
    display: flex;
    align-items: center;
    justify-content: center;
    position: absolute;
    left: 26px;
    top: 26px;
    width: 20px;
    height: 20px;
    border-radius: 50%;
    background-color: #444;
    border: 1px solid #777;
    font-size: 13px;
    color: #fff;
}

/* toast */
.toast {
    display: flex;
    position: absolute;
    z-index: 4;
    left: 1445px;
    top: 865px;
    width: 455px;
    height: 150px;
    padding: 26px 0 0 20px;
    background-color: #484848;
}

.toast-icon {
    width: 60px;
    height: 40px;
    margin-top: 14px;
    flex: none;
}

.toast-text {
    margin-left: 20px;
    width: 350px;
}

.toast-title {
    font-size: 17px;
    line-height: 24px;
    font-weight: 600;
    color: #fff;
}

.toast-body {
    font-size: 17.700px;
    line-height: 25.500px;
    color: #b8b8b8;
}

.toast-app {
    margin-top: 5px;
    font-size: 14px;
    line-height: 20px;
    color: #b8b8b8;
}
```
